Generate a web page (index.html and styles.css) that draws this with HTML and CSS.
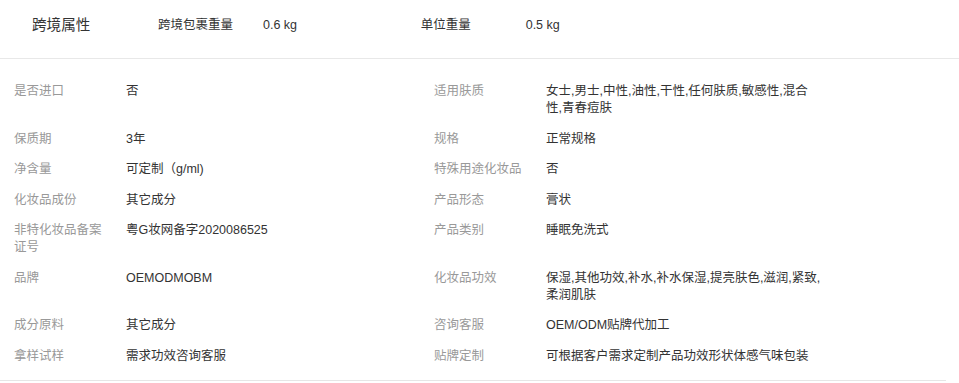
FILE: index.html
```html
<!DOCTYPE html>
<html lang="zh-CN">
<head>
<meta charset="utf-8">
<title>跨境属性</title>
<link rel="stylesheet" href="styles.css">
</head>
<body>
<div class="cross">
  <div class="cross-title">跨境属性</div>
  <div class="cross-pair"><span class="cross-label">跨境包裹重量</span><span class="cross-value">0.6 kg</span></div>
  <div class="cross-pair"><span class="cross-label">单位重量</span><span class="cross-value">0.5 kg</span></div>
</div>
<div class="attrs">
  <div class="attr"><div class="attr-label">是否进口</div><div class="attr-value">否</div></div>
  <div class="attr"><div class="attr-label">适用肤质</div><div class="attr-value">女士,男士,中性,油性,干性,任何肤质,敏感性,混合性,青春痘肤</div></div>
  <div class="attr"><div class="attr-label">保质期</div><div class="attr-value">3年</div></div>
  <div class="attr"><div class="attr-label">规格</div><div class="attr-value">正常规格</div></div>
  <div class="attr"><div class="attr-label">净含量</div><div class="attr-value">可定制（g/ml)</div></div>
  <div class="attr"><div class="attr-label">特殊用途化妆品</div><div class="attr-value">否</div></div>
  <div class="attr"><div class="attr-label">化妆品成份</div><div class="attr-value">其它成分</div></div>
  <div class="attr"><div class="attr-label">产品形态</div><div class="attr-value">膏状</div></div>
  <div class="attr"><div class="attr-label">非特化妆品备案证号</div><div class="attr-value">粤G妆网备字2020086525</div></div>
  <div class="attr"><div class="attr-label">产品类别</div><div class="attr-value">睡眠免洗式</div></div>
  <div class="attr"><div class="attr-label">品牌</div><div class="attr-value">OEMODMOBM</div></div>
  <div class="attr"><div class="attr-label">化妆品功效</div><div class="attr-value">保湿,其他功效,补水,补水保湿,提亮肤色,滋润,紧致,柔润肌肤</div></div>
  <div class="attr"><div class="attr-label">成分原料</div><div class="attr-value">其它成分</div></div>
  <div class="attr"><div class="attr-label">咨询客服</div><div class="attr-value">OEM/ODM贴牌代加工</div></div>
  <div class="attr"><div class="attr-label">拿样试样</div><div class="attr-value">需求功效咨询客服</div></div>
  <div class="attr"><div class="attr-label">贴牌定制</div><div class="attr-value">可根据客户需求定制产品功效形状体感气味包装</div></div>
</div>
</body>
</html>
```
FILE: styles.css
```css
html, body {
  margin: 0;
  padding: 0;
  background: #fff;
}
body {
  font-family: "Liberation Sans", "Noto Sans CJK SC", sans-serif;
  font-size: 12.5px;
  color: #333;
}
.cross {
  display: flex;
  align-items: flex-start;
  box-sizing: border-box;
  height: 59px;
  padding: 16px 0 0 32px;
  border-bottom: 1px solid #e8e8e8;
  line-height: 18px;
}
.cross-title {
  width: 126px;
  font-size: 14.6px;
  color: #333;
}
.cross-pair {
  display: flex;
  width: 262.7px;
}
.cross-label {
  width: 105px;
  color: #333;
}
.cross-value {
  color: #333;
}
.attrs {
  width: 946px;
  box-sizing: border-box;
  padding: 17px 0 9px 14px;
  display: grid;
  grid-template-columns: 420px 420px;
  border-bottom: 1px solid #e6e6e6;
  line-height: 17px;
}
.attr {
  display: flex;
  padding: 7px 0 6.5px;
}
.attr-label {
  width: 112px;
  flex: none;
  color: #999;
  padding-right: 16px;
  box-sizing: border-box;
}
.attr-value {
  width: 275px;
  color: #333;
}
```
